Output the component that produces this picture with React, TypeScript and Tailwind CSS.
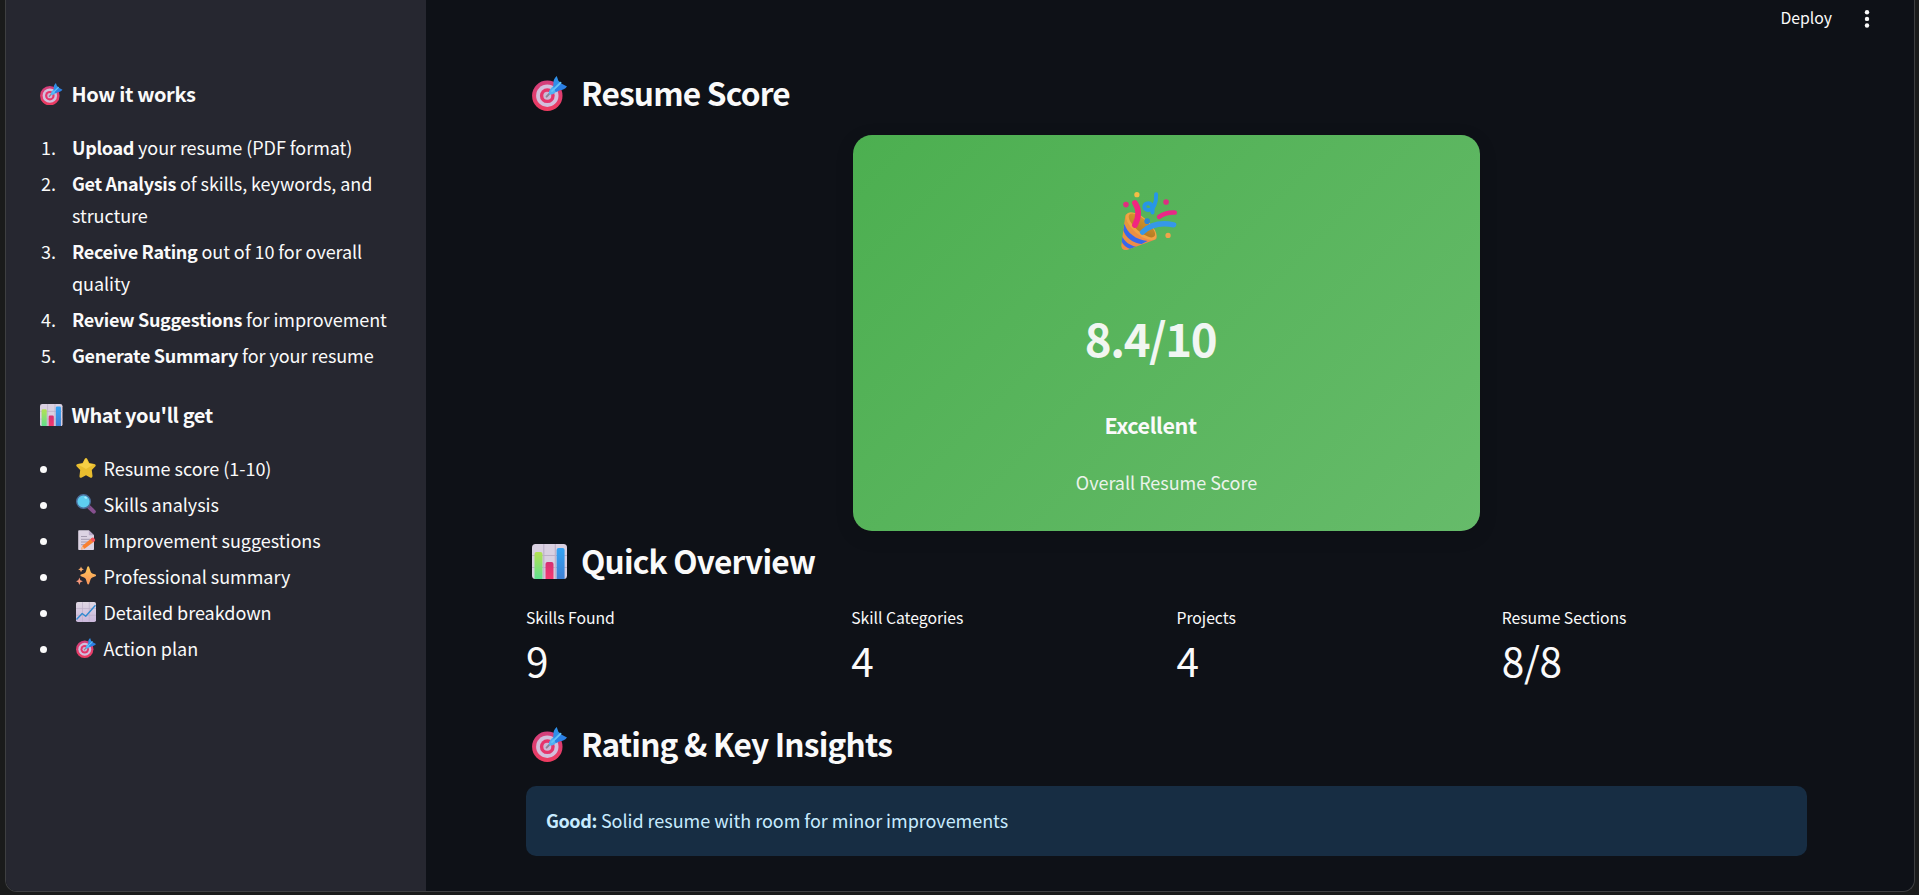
import React from "react";

type IconProps = { className?: string };

function Target({ className }: IconProps) {
  return (
    <svg viewBox="0 0 35 35" className={className}>
      <defs>
        <linearGradient id="tg" x1="0" y1="0" x2="0" y2="1">
          <stop offset="0" stopColor="#d23f7c" />
          <stop offset="1" stopColor="#ee3b60" />
        </linearGradient>
      </defs>
      <circle cx="15.3" cy="19.7" r="15.2" fill="url(#tg)" />
      <circle cx="15.3" cy="19.7" r="11.2" fill="#d3bfdc" />
      <circle cx="15.3" cy="19.7" r="7.4" fill="#e6356b" />
      <circle cx="15.3" cy="19.7" r="4" fill="#cdb9d6" />
      <path d="M14.6 20.6 19 16" stroke="#8c8496" strokeWidth="2" strokeLinecap="round" />
      <path d="M17.2 18.4c-.8-2.300.2-4.600 2.400-6.800L27 5.500l3 3-6.200 7.400c-2 2.200-4.300 3.200-6.600 2.500Z" fill="#4fb0f2" />
      <path d="M21.500 7.200c-.3-2.500.8-4.700 3.200-7.200l1.700 4.800 2.100 2.100-6.400 6.300c-1-2-.9-3.800-.6-6Z" fill="#2f8fe8" />
      <path d="M22.700 13.600 29.300 7.500l5.700 3c-2 2.500-4.500 3.700-7.200 3.800l-4 2Z" fill="#2b80e4" />
      <path d="m20 15.200 8.600-8.500" stroke="#62c3f8" strokeWidth="1.700" strokeLinecap="round" />
    </svg>
  );
}

function BarChart({ className }: IconProps) {
  return (
    <svg viewBox="0 0 35 35" className={className}>
      <defs>
        <linearGradient id="bgreen" x1="0" y1="0" x2="0" y2="1">
          <stop offset="0" stopColor="#b4e052" />
          <stop offset="1" stopColor="#5fdf90" />
        </linearGradient>
        <linearGradient id="bpink" x1="0" y1="0" x2="0" y2="1">
          <stop offset="0" stopColor="#d52f72" />
          <stop offset="1" stopColor="#f53a70" />
        </linearGradient>
        <linearGradient id="bblue" x1="0" y1="0" x2="0" y2="1">
          <stop offset="0" stopColor="#33a4f5" />
          <stop offset="1" stopColor="#3f7fd4" />
        </linearGradient>
      </defs>
      <rect width="35" height="35" rx="3.500" fill="#d9d0e1" />
      <path d="M11.800 0v35M23.300 0v35M0 11.500h35M0 23.500h35" stroke="#bcb0c8" strokeWidth="1.100" />
      <path d="M2.500 35V10a2 2 0 0 1 2-2h4a2 2 0 0 1 2 2v25Z" fill="url(#bgreen)" />
      <path d="M13.500 35V20a2 2 0 0 1 2-2h4a2 2 0 0 1 2 2v15Z" fill="url(#bpink)" />
      <path d="M24.600 35V6a2 2 0 0 1 2-2h4a2 2 0 0 1 2 2v29Z" fill="url(#bblue)" />
    </svg>
  );
}

function Star({ className }: IconProps) {
  return (
    <svg viewBox="0 0 20 20" className={className}>
      <path
        d="M8.700.9c.6-1.200 2-1.200 2.600 0l2 4.200 4.900.8c1.500.3 2 1.700 1 2.700l-3.400 3.500.7 5.700c.1 1.600-1.100 2.400-2.400 1.700L10 17.300l-4.200 2.200c-1.300.7-2.500-.1-2.300-1.700l.7-5.700L.8 8.600c-1-1-.5-2.500.9-2.700l4.900-.8Z"
        fill="#e9bd2e"
      />
      <path d="M8.900 1.500c.4-.8 1.500-.8 1.900 0l2 4.200 4.800.8L10 11 2.200 6.500l4.700-.8Z" fill="#f6cf45" />
    </svg>
  );
}

function Magnifier({ className }: IconProps) {
  return (
    <svg viewBox="0 0 20 20" className={className}>
      <path d="m13.200 13.200 4.600 4.400" stroke="#86508f" strokeWidth="4" strokeLinecap="round" />
      <path d="m11.500 11.500 2.500 2.500" stroke="#6a5372" strokeWidth="2" />
      <circle cx="7.500" cy="7.500" r="6.800" fill="#5ecdf0" stroke="#4a6e9c" strokeWidth="1.400" />
      <ellipse cx="9.600" cy="3.700" rx="1.500" ry="1" transform="rotate(30 9.600 3.700)" fill="#a5ecff" />
    </svg>
  );
}

function Memo({ className }: IconProps) {
  return (
    <svg viewBox="0 0 20 20" className={className}>
      <path d="M2.200 1.200c0-.6.500-1 1-1h9.600L18 5.300v14a.8.800 0 0 1-.8.700H3.200c-.6 0-1-.4-1-1Z" fill="#dcd3e3" />
      <path d="M12.800.2 18 5.300h-4.200c-.6 0-1-.4-1-1Z" fill="#b8a9c6" />
      <path d="M5 6.500h6M5 9.300h9M5 12h7M5 14.700h4" stroke="#a49bb0" />
      <path d="m5 19.500 1.200-3.600L15.800 8l3 3-10.200 7.700Z" fill="#f98132" />
      <path d="m14.300 9.200 1.900-1.500c.9-.7 3.600 1.700 2.800 3l-1.900 1.500Z" fill="#f1535f" />
      <path d="m5 19.500 1.200-3.600 2.400 2.800Z" fill="#f3bd97" />
    </svg>
  );
}

function Sparkles({ className }: IconProps) {
  return (
    <svg viewBox="0 0 20 20" className={className}>
      <defs>
        <linearGradient id="spk" x1="0" y1="0" x2="0" y2="1">
          <stop offset="0" stopColor="#fcc95a" />
          <stop offset="1" stopColor="#fa9459" />
        </linearGradient>
      </defs>
      <path d="M11.300.9c.3-1 1.500-1 1.800 0l1.500 4.700c.3.900.9 1.500 1.700 1.800l3.200 1.200c.8.300.8 1.300 0 1.600l-3.200 1.300c-.8.300-1.400.9-1.700 1.800l-1.500 4.400c-.3.900-1.500.9-1.800 0l-1.400-4.400c-.3-.900-.9-1.500-1.800-1.800L5 10.200c-.8-.3-.8-1.300 0-1.600l3.100-1.200c.9-.3 1.500-.900 1.800-1.800Z" fill="url(#spk)" />
      <path d="m5 .5.900 2 2 .8-2 .9-.9 2-.8-2-2-.9 2-.8Z" fill="#fbae6c" />
      <path d="m3.300 11.500 1.100 2.700 2.500 1-2.500 1.100L3.300 19l-1-2.700L0 15.200l2.300-1Z" fill="#f99a7c" />
    </svg>
  );
}

function LineChart({ className }: IconProps) {
  return (
    <svg viewBox="0 0 20 20" className={className}>
      <defs>
        <linearGradient id="lcb" x1="0" y1="0" x2="0" y2="1">
          <stop offset="0" stopColor="#dfd7e3" />
          <stop offset="1" stopColor="#cbb8dc" />
        </linearGradient>
      </defs>
      <rect width="20" height="20" rx="1.800" fill="url(#lcb)" />
      <path d="M6.500 0v20M13.300 0v20M0 6.500h20M0 13.300h20" stroke="#bdb0c8" strokeWidth=".7" />
      <path d="m.5 17.500 5.700-6 3.500 2.700L19.500 3.300" fill="none" stroke="#2f8ad0" strokeWidth="1.400" strokeLinejoin="round" />
    </svg>
  );
}

function PartyPopper({ className }: IconProps) {
  return (
    <svg viewBox="0 0 175 175" className={className}>
      <defs>
        <linearGradient id="cone" x1="0" y1="0" x2="1" y2="1">
          <stop offset="0" stopColor="#e29a35" />
          <stop offset="1" stopColor="#f58356" />
        </linearGradient>
        <linearGradient id="inner" x1="0" y1="0" x2="1" y2="1">
          <stop offset="0" stopColor="#d99a30" />
          <stop offset="1" stopColor="#ad7622" />
        </linearGradient>
        <clipPath id="coneClip">
          <path d="M13 72 1 160c-1 12 8 18 19 14l84-31c8-3 4-20-20-45C60 74 20 54 13 72Z" />
        </clipPath>
      </defs>
      <g clipPath="url(#coneClip)">
        <path d="M0 50h120v125H0Z" fill="url(#cone)" />
        <path d="M10 96c9 28 34 48 70 52l-18 9C36 154 14 138 6 114Z" fill="#3568ed" />
        <path d="M4 134c8 16 22 27 42 31l-18 7C16 168 6 160 1 148Z" fill="#3568ed" />
      </g>
      <ellipse cx="61" cy="103" rx="57" ry="25" transform="rotate(41 61 103)" fill="#f1a344" />
      <ellipse cx="63" cy="101" rx="50" ry="19" transform="rotate(41 63 101)" fill="url(#inner)" />
      <path d="M42 33c15 22 11 46 0 67" fill="none" stroke="#f3247f" strokeWidth="17" strokeLinecap="round" />
      <path d="M65 121c25-24 60-29 94-22" fill="none" stroke="#3598e8" strokeWidth="16" strokeLinecap="round" />
      <path d="M106 7c1 24-7 47-24 47-16 0-15-20 0-20 11 0 15 13 13 28" fill="none" stroke="#2796e8" strokeWidth="12" strokeLinecap="round" />
      <path d="M115 75c15-11 28-14 47-13" fill="none" stroke="#e92886" strokeWidth="14" strokeLinecap="round" />
      <circle cx="48" cy="8" r="8" fill="#f6bd45" />
      <circle cx="15" cy="38" r="8.500" fill="#df2e7e" />
      <circle cx="136" cy="30" r="8.500" fill="#dc2f82" />
      <circle cx="79" cy="88" r="8.500" fill="#2c84d7" />
      <circle cx="142" cy="131" r="8" fill="#f0a34a" />
    </svg>
  );
}

const steps: { strong: string; rest: string }[] = [
  { strong: "Upload", rest: " your resume (PDF format)" },
  { strong: "Get Analysis", rest: " of skills, keywords, and structure" },
  { strong: "Receive Rating", rest: " out of 10 for overall quality" },
  { strong: "Review Suggestions", rest: " for improvement" },
  { strong: "Generate Summary", rest: " for your resume" },
];

const benefits: { Icon: React.FC<IconProps>; label: string }[] = [
  { Icon: Star, label: "Resume score (1-10)" },
  { Icon: Magnifier, label: "Skills analysis" },
  { Icon: Memo, label: "Improvement suggestions" },
  { Icon: Sparkles, label: "Professional summary" },
  { Icon: LineChart, label: "Detailed breakdown" },
  { Icon: Target, label: "Action plan" },
];

const metrics = [
  { label: "Skills Found", value: "9" },
  { label: "Skill Categories", value: "4" },
  { label: "Projects", value: "4" },
  { label: "Resume Sections", value: "8/8" },
];

function Heading({ Icon, children }: { Icon: React.FC<IconProps>; children: React.ReactNode }) {
  return (
    <h2 className="flex h-[42px] items-center pl-1.5 text-[31.6px] leading-[40px] font-semibold tracking-[-0.78px]">
      <Icon className="mr-[14px] h-[35px] w-[35px]" />
      <span className="pb-0.5">{children}</span>
    </h2>
  );
}

function SideHeading({ Icon, children }: { Icon: React.FC<IconProps>; children: React.ReactNode }) {
  return (
    <h3 className="flex h-7 items-center text-[20px] leading-7 font-semibold tracking-[-0.38px]">
      <Icon className="mr-[9px] h-[22.500px] w-[22.500px]" />
      <span>{children}</span>
    </h3>
  );
}

export default function App() {
  return (
    <div className="h-[895px] w-[1919px] overflow-hidden bg-[#1a1b1b] pr-1 pl-[5px] font-['Noto_Sans_CJK_SC',sans-serif] text-[18px] leading-8 tracking-[-0.03px] text-[#fafafa]">
      <div className="flex h-[892px] overflow-hidden rounded-b-xl border-x border-b border-[#3e3f41] bg-[#0e1117]">
        <aside className="w-[420px] shrink-0 bg-[#262730] pt-20 pr-7 pl-[34px]">
          <SideHeading Icon={Target}>How it works</SideHeading>
          <ol className="mt-[23px] flex flex-col gap-1">
            {steps.map((s, i) => (
              <li key={s.strong} className="flex tracking-[-0.06px]">
                <span className="w-8 shrink-0 pl-px">{i + 1}.</span>
                <span>
                  <strong className="font-semibold tracking-[-0.32px]">{s.strong}</strong>
                  {s.rest}
                </span>
              </li>
            ))}
          </ol>
          <div className="mt-[30px]">
            <SideHeading Icon={BarChart}>What you'll get</SideHeading>
          </div>
          <ul className="mt-[23px] flex flex-col gap-1">
            {benefits.map(({ Icon, label }) => (
              <li key={label} className="flex h-8 items-center">
                <span className="mt-0.5 mr-[29px] h-[7px] w-[7px] rounded-full bg-[#fafafa]" />
                <Icon className="mr-[7.500px] h-5 w-5" />
                <span>{label}</span>
              </li>
            ))}
          </ul>
        </aside>

        <main className="flex grow flex-col">
          <header className="flex h-[37px] shrink-0 items-center justify-end pr-[44px]">
            <span className="pb-0.5 text-[15.800px]">Deploy</span>
            <svg viewBox="0 0 6 18" className="ml-8 h-[18px] w-1.5 fill-[#fafafa]">
              <circle cx="3" cy="2.300" r="2.200" />
              <circle cx="3" cy="8.900" r="2.200" />
              <circle cx="3" cy="15.500" r="2.200" />
            </svg>
          </header>

          <div className="flex flex-col pt-[35px] pr-[107px] pl-[100px]">
            <Heading Icon={Target}>Resume Score</Heading>

            <section className="mt-[21px] ml-[327px] flex h-[396px] w-[627px] flex-col items-center rounded-[19px] bg-linear-135 from-[#4caf50] to-[#66bb6a] pt-[57px] text-center shadow-[0_5px_19px_rgba(0,0,0,0.12)]">
              <div className="flex flex-col items-center pr-[32px]">
                <PartyPopper className="h-[58px] w-[58px]" />
                <p className="mt-[57px] text-[45.500px] leading-[60px] font-semibold tracking-[-1.4px] opacity-95">8.4/10</p>
                <p className="mt-[43px] text-[21.500px] leading-[30px] font-semibold tracking-[-0.4px]">Excellent</p>
              </div>
              <p className="mt-[26px] opacity-90">Overall Resume Score</p>
            </section>

            <div className="mt-[9px]">
              <Heading Icon={BarChart}>Quick Overview</Heading>
            </div>

            <dl className="mt-[22px] grid grid-cols-4 gap-5">
              {metrics.map((m) => (
                <div key={m.label}>
                  <dt className="text-[15.750px] leading-7">{m.label}</dt>
                  <dd className="text-[40.500px] leading-[56px] tracking-[-0.3px]">{m.value}</dd>
                </div>
              ))}
            </dl>

            <div className="mt-[35px]">
              <Heading Icon={Target}>Rating &amp; Key Insights</Heading>
            </div>

            <div className="mt-[21px] flex h-[70px] items-center rounded-[10px] bg-[#172d43] pb-0.5 pl-5 text-[#c7ebff]">
              <p>
                <strong className="font-semibold tracking-[-0.4px]">Good:</strong> Solid resume with room for minor improvements
              </p>
            </div>
          </div>
        </main>
      </div>
    </div>
  );
}
